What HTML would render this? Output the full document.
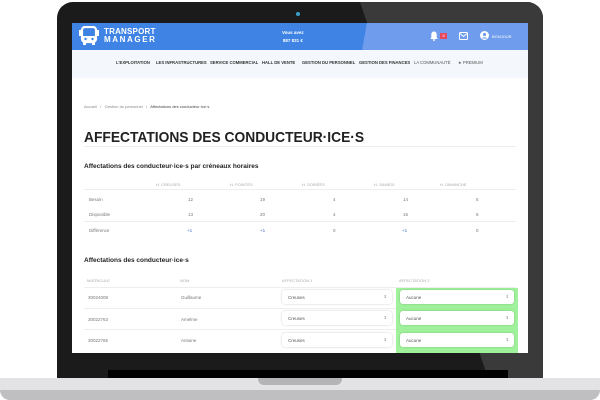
<!DOCTYPE html>
<html><head><meta charset="utf-8"><style>
*{margin:0;padding:0;box-sizing:border-box}
body{width:600px;height:400px;background:#fff;position:relative;overflow:hidden;font-family:"Liberation Sans",sans-serif}
.a{position:absolute}
.bezel{left:57px;top:2px;width:486px;height:378px;background:#1b1b1b;border-radius:16px 16px 0 0}
.refl{left:360px;top:2px;width:183px;height:376px;background:#3a3a3a;clip-path:polygon(0 0,100% 0,100% 100%,70% 100%);border-radius:0 16px 0 0}
.screen{left:72px;top:23px;width:456px;height:330px;background:#fff;overflow:hidden}
.hdr{left:0;top:0;width:456px;height:27px;background:linear-gradient(100deg,#3f84e5 0,#3f84e5 64%,#6f9cec 64%,#6f9cec 100%)}
.nav{left:0;top:27px;width:456px;height:28px;background:#f4f7fc}
.t{position:absolute;white-space:nowrap}
.nv{font-size:4.2px;font-weight:bold;color:#333;top:37px}
.sm{font-size:4.5px;color:#777}
.h{font-size:4px;color:#aaa}
.sel{position:absolute;height:14px;background:#fff;border-radius:3px;box-shadow:0 0 2px rgba(0,0,0,.2);font-size:4.5px;color:#555;padding:4.5px 6px}
.sel:after{content:"⇕";position:absolute;right:5px;top:4px;font-size:4px;color:#777}
.ln{position:absolute;height:1px;background:#eee}
</style></head><body>
<div class="a bezel"></div>
<div class="a refl"></div>
<div class="a" style="left:296px;top:12px;width:4px;height:4px;border-radius:50%;background:#3aa0c8"></div>
<div class="a" style="left:108px;top:370px;width:400px;height:8px;background:#000"></div>
<div class="a" style="left:0;top:378px;width:600px;height:22px;background:#d3d3d5;border-radius:0 0 30px 20px"></div>
<div class="a" style="left:0;top:378px;width:600px;height:12px;background:#e3e3e5"></div>
<div class="a" style="left:0;top:390px;width:600px;height:10px;background:#bfbfc1;border-radius:0 0 40px 40px"></div>
<div class="a" style="left:258px;top:378px;width:84px;height:7px;background:#b4b4b6;border-radius:0 0 6px 6px"></div>
<div class="a screen">
 <div class="a hdr"></div>
 <svg class="a" style="left:7px;top:3px" width="20" height="21" viewBox="0 0 20 21"><rect x="3" y="1" width="14" height="15" rx="3" fill="none" stroke="#fff" stroke-width="2.2"/><rect x="0" y="4" width="2" height="6" fill="#fff"/><rect x="18" y="4" width="2" height="6" fill="#fff"/><rect x="3" y="10" width="14" height="6" fill="#fff"/><circle cx="6.5" cy="13" r="1.2" fill="#3f84e5"/><circle cx="13.5" cy="13" r="1.2" fill="#3f84e5"/><rect x="4" y="16" width="3" height="3" fill="#fff"/><rect x="13" y="16" width="3" height="3" fill="#fff"/></svg>
 <div class="t" style="left:32px;top:5px;color:#fff;font-weight:bold;font-size:8px;line-height:8px;letter-spacing:.2px">TRANSPORT<br><span style="letter-spacing:1.6px">MANAGER</span></div>
 <div class="t" style="left:210px;top:6px;color:#fff;font-weight:bold;font-size:4.5px;line-height:8px;text-align:center">Vous avez<br>887 831 €</div>
 <svg class="a" style="left:358px;top:8px" width="8" height="10" viewBox="0 0 8 10"><path d="M4 0.5C2 0.5 1.3 2 1.3 4V6.5L0.3 8H7.7L6.7 6.5V4C6.7 2 6 0.5 4 0.5Z" fill="#fff"/><circle cx="4" cy="9" r="1" fill="#fff"/></svg>
 <div class="a" style="left:368px;top:10px;width:7px;height:6px;background:#e8485f;color:#fff;font-size:4px;text-align:center;line-height:6px">3</div>
 <svg class="a" style="left:387px;top:9px" width="9" height="8" viewBox="0 0 9 8"><rect x=".5" y=".5" width="8" height="7" rx="1" fill="none" stroke="#fff"/><path d="M1 1.5L4.5 4.5L8 1.5" fill="none" stroke="#fff"/></svg>
 <svg class="a" style="left:408px;top:8px" width="9" height="9" viewBox="0 0 9 9"><circle cx="4.5" cy="4.5" r="4.5" fill="#fff"/><circle cx="4.5" cy="3.5" r="1.6" fill="#6f9cec"/><path d="M1.8 7.5C2.5 5.8 6.5 5.8 7.2 7.5" fill="#6f9cec"/></svg>
 <div class="t" style="left:420px;top:11px;color:#fff;font-size:4px">BONJOUR</div>
 <div class="a nav"></div>
 <div class="t nv" style="left:44px">L'EXPLOITATION</div>
 <div class="t nv" style="left:84px">LES INFRASTRUCTURES</div>
 <div class="t nv" style="left:138px">SERVICE COMMERCIAL</div>
 <div class="t nv" style="left:190px">HALL DE VENTE</div>
 <div class="t nv" style="left:230px">GESTION DU PERSONNEL</div>
 <div class="t nv" style="left:287px">GESTION DES FINANCES</div>
 <div class="t nv" style="left:342px;font-weight:normal;color:#555">LA COMMUNAUTÉ</div>
 <div class="t nv" style="left:386px;font-weight:normal;color:#555">★ PREMIUM</div>

 <div class="t sm" style="left:12px;top:81px;font-size:4px;color:#888">Accueil &nbsp; / &nbsp; Gestion du personnel &nbsp; / &nbsp; <span style="color:#444">Affectations des conducteur·ice·s</span></div>
 <div class="t" style="left:12px;top:106px;font-size:15px;font-weight:bold;color:#222;transform:scaleX(.92);transform-origin:left">AFFECTATIONS DES CONDUCTEUR·ICE·S</div>
 <div class="ln" style="left:12px;top:123px;width:432px"></div>

 <div class="t" style="left:12px;top:140px;font-size:6.5px;font-weight:bold;color:#222">Affectations des conducteur·ice·s par créneaux horaires</div>
 <div class="t h" style="left:84px;top:159px">H. CREUSES</div>
 <div class="t h" style="left:158px;top:159px">H. POINTES</div>
 <div class="t h" style="left:230px;top:159px">H. SOIRÉES</div>
 <div class="t h" style="left:302px;top:159px">H. SAMEDI</div>
 <div class="t h" style="left:368px;top:159px">H. DIMANCHE</div>
 <div class="ln" style="left:12px;top:166px;width:432px"></div>
 <div class="t sm" style="left:17px;top:174px">Besoin</div>
 <div class="t sm" style="left:17px;top:189px">Disponible</div>
 <div class="ln" style="left:12px;top:198px;width:432px"></div>
 <div class="t sm" style="left:17px;top:205px">Différence</div>
 <div class="t sm" style="left:116px;top:174px">12</div><div class="t sm" style="left:188px;top:174px">19</div><div class="t sm" style="left:261px;top:174px">4</div><div class="t sm" style="left:331px;top:174px">14</div><div class="t sm" style="left:404px;top:174px">5</div>
 <div class="t sm" style="left:116px;top:189px">13</div><div class="t sm" style="left:188px;top:189px">20</div><div class="t sm" style="left:261px;top:189px">4</div><div class="t sm" style="left:331px;top:189px">15</div><div class="t sm" style="left:404px;top:189px">5</div>
 <div class="t sm" style="left:115px;top:205px;color:#3f6ec8">+1</div><div class="t sm" style="left:188px;top:205px;color:#3f6ec8">+1</div><div class="t sm" style="left:261px;top:205px">0</div><div class="t sm" style="left:330px;top:205px;color:#3f6ec8">+1</div><div class="t sm" style="left:404px;top:205px">0</div>

 <div class="t" style="left:12px;top:234px;font-size:6.5px;font-weight:bold;color:#222">Affectations des conducteur·ice·s</div>
 <div class="t h" style="left:15px;top:255px">MATRICULE</div>
 <div class="t h" style="left:108px;top:255px">NOM</div>
 <div class="t h" style="left:210px;top:255px">AFFECTATION 1</div>
 <div class="t h" style="left:327px;top:255px">AFFECTATION 2</div>
 <div class="ln" style="left:12px;top:264px;width:432px"></div>
 <div class="ln" style="left:12px;top:285px;width:432px"></div>
 <div class="ln" style="left:12px;top:306px;width:432px"></div>
 <div class="a" style="left:324px;top:265px;width:122px;height:65px;background:#8ef08a;opacity:.85"></div>
 <div class="t sm" style="left:16px;top:272px">30024008</div><div class="t sm" style="left:109px;top:272px">Guillaume</div>
 <div class="t sm" style="left:16px;top:294px">30022763</div><div class="t sm" style="left:109px;top:294px">Amelme</div>
 <div class="t sm" style="left:16px;top:315px">30022765</div><div class="t sm" style="left:109px;top:315px">Antoine</div>
 <div class="sel" style="left:210px;top:267px;width:110px">Creuses</div>
 <div class="sel" style="left:210px;top:288px;width:110px">Creuses</div>
 <div class="sel" style="left:210px;top:310px;width:110px">Creuses</div>
 <div class="sel" style="left:328px;top:267px;width:114px">Aucune</div>
 <div class="sel" style="left:328px;top:288px;width:114px">Aucune</div>
 <div class="sel" style="left:328px;top:310px;width:114px">Aucune</div>
</div>
</body></html>
